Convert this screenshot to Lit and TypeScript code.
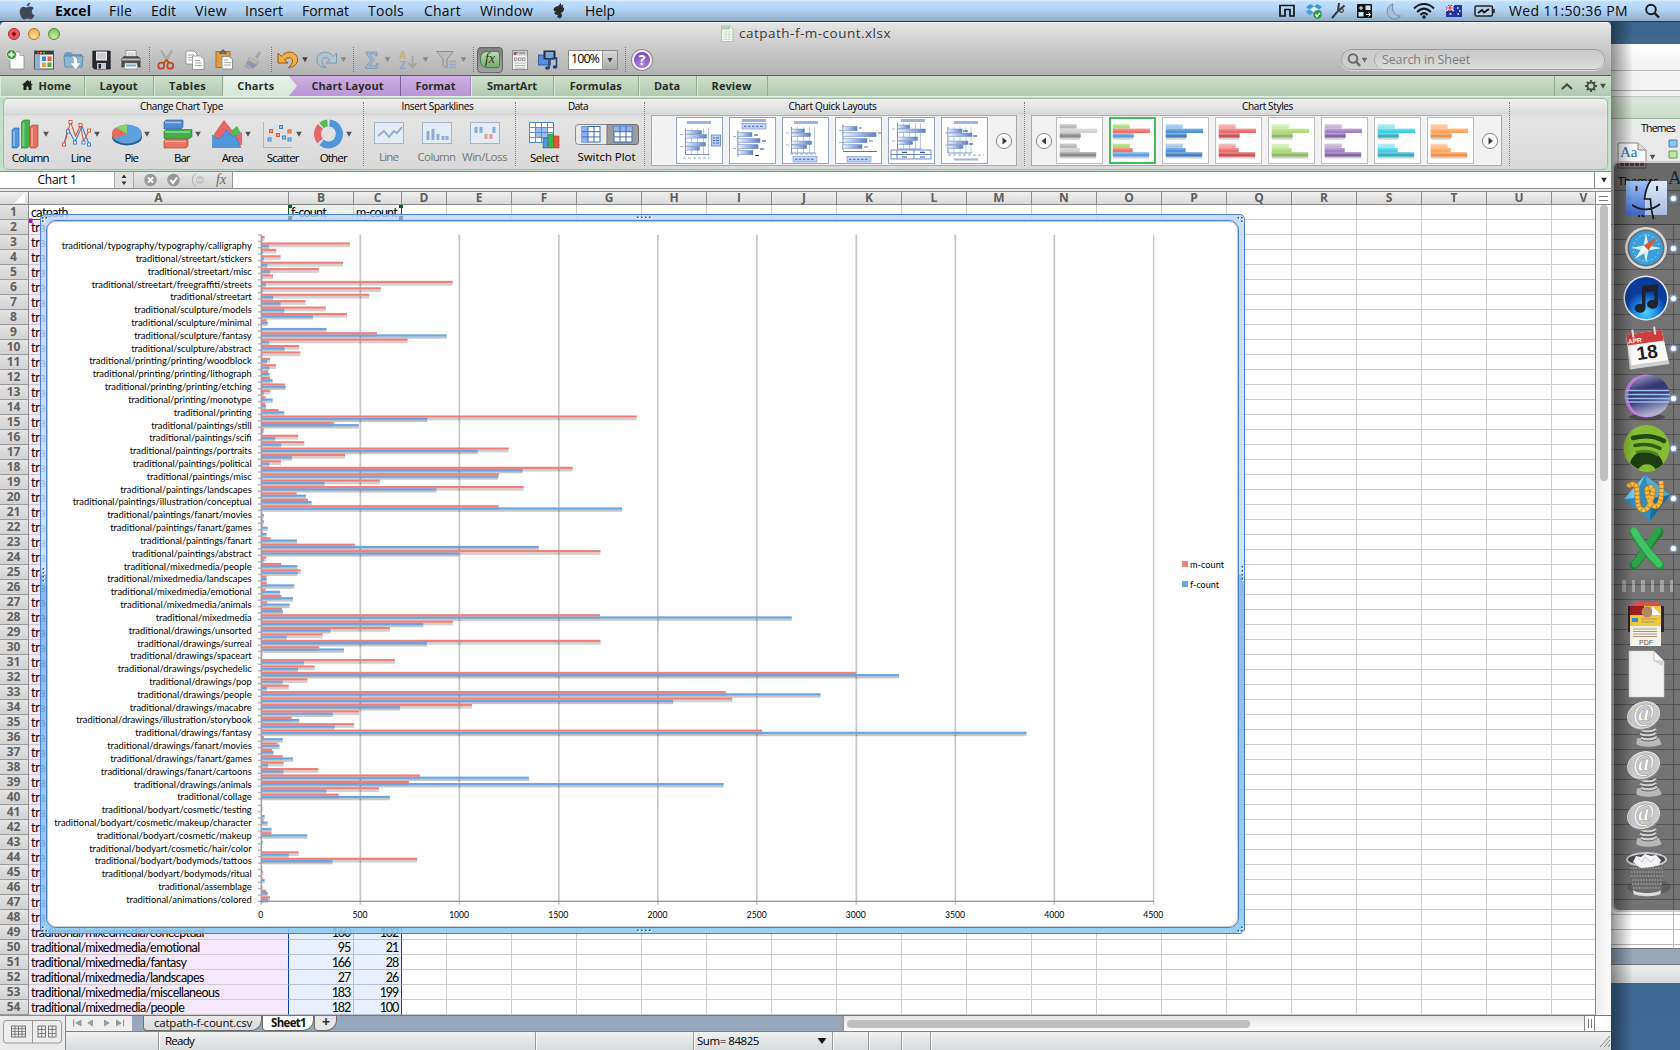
import { LitElement, html, svg, css } from "lit";
import { customElement } from "lit/decorators.js";
import { classMap } from "lit/directives/class-map.js";

/* A label whose tracking is tuned so that it fills the given width. */
const fit = (text: string, w: number) => html`<span class="fit" data-w=${w}>${text}</span>`;

/* [m-count, f-count] per category, from the top of the axis down. */
const BARS: [number, number][] = [
  [17, 5], [447, 40], [76, 8], [97, 13], [412, 30], [290, 45], [59, 7], [965, 24], [603, 7], [544, 59],
  [223, 97], [326, 116], [432, 260], [27, 32], [0, 329], [583, 934], [738, 40], [191, 118], [197, 6], [44, 29],
  [74, 40], [34, 42], [44, 57], [119, 123], [44, 12], [22, 57], [20, 24], [87, 116], [1893, 837], [365, 492],
  [13, 8], [186, 71], [217, 101], [1247, 1091], [422, 155], [99, 40], [1570, 1317], [1198, 1193], [598, 319], [1323, 883],
  [178, 225], [235, 254], [1196, 1819], [5, 13], [7, 13], [8, 32], [8, 27], [47, 180], [472, 1399], [1710, 996],
  [25, 13], [100, 182], [199, 183], [26, 27], [28, 166], [21, 95], [102, 160], [30, 143], [104, 109], [1708, 2675],
  [967, 817], [648, 349], [309, 128], [1710, 835], [292, 417], [6, 0], [673, 215], [270, 185], [2999, 3215], [233, 108],
  [138, 28], [2342, 2820], [2375, 2076], [1062, 699], [494, 361], [153, 191], [469, 370], [2525, 3858], [13, 108], [82, 92],
  [54, 62], [108, 160], [113, 34], [287, 112], [800, 1350], [744, 2331], [593, 329], [390, 648], [4, 4], [6, 5],
  [0, 17], [12, 32], [0, 52], [52, 232], [0, 7], [0, 4], [188, 138], [786, 359], [0, 5], [8, 0],
  [7, 17], [0, 6], [25, 32], [44, 34],
];

/* [category path, drawn width] for every second category. */
const LABELS: [string, number][] = [
  ["typography/typography/calligraphy", 190], ["streetart/stickers", 116], ["streetart/misc", 104],
  ["streetart/freegraffiti/streets", 160], ["streetart", 81.5], ["sculpture/models", 117.5],
  ["sculpture/minimal", 120.5], ["sculpture/fantasy", 117.5], ["sculpture/abstract", 120.5],
  ["printing/printing/woodblock", 162.5], ["printing/printing/lithograph", 159], ["printing/printing/etching", 147],
  ["printing/monotype", 123.5], ["printing", 78], ["paintings/still", 100.5], ["paintings/scifi", 102.5],
  ["paintings/portraits", 122], ["paintings/political", 119], ["paintings/misc", 105], ["paintings/landscapes", 131.5],
  ["paintings/illustration/conceptual", 179], ["paintings/fanart/movies", 144.5], ["paintings/fanart/games", 141.5],
  ["paintings/fanart", 111.5], ["paintings/abstract", 120], ["mixedmedia/people", 128], ["mixedmedia/landscapes", 144.5],
  ["mixedmedia/emotional", 141], ["mixedmedia/animals", 131.5], ["mixedmedia", 96], ["drawings/unsorted", 123],
  ["drawings/surreal", 114.5], ["drawings/spaceart", 121.5], ["drawings/psychedelic", 134], ["drawings/pop", 102.5],
  ["drawings/people", 114.5], ["drawings/macabre", 122], ["drawings/illustration/storybook", 175.5],
  ["drawings/fantasy", 116.5], ["drawings/fanart/movies", 144.5], ["drawings/fanart/games", 141.5],
  ["drawings/fanart/cartoons", 151], ["drawings/animals", 118], ["collage", 74.5], ["bodyart/cosmetic/testing", 150],
  ["bodyart/cosmetic/makeup/character", 197.5], ["bodyart/cosmetic/makeup", 155], ["bodyart/cosmetic/hair/color", 162.5],
  ["bodyart/bodymods/tattoos", 157], ["bodyart/bodymods/ritual", 150], ["assemblage", 93.5], ["animations/colored", 125.5],
];

const X0 = 261.3, UNIT = 99.17 / 500, TOP = 234.7, PITCH = 666.6 / 104;

const COLS = "ABCDEFGHIJKLMNOPQRSTUV".split("");
const FILLED: Record<number, [string, number, number, number]> = {
  49: ["traditional/mixedmedia/conceptual", 173, 160, 102],
  50: ["traditional/mixedmedia/emotional", 169, 95, 21],
  51: ["traditional/mixedmedia/fantasy", 155.5, 166, 28],
  52: ["traditional/mixedmedia/landscapes", 173, 27, 26],
  53: ["traditional/mixedmedia/miscellaneous", 188.5, 183, 199],
  54: ["traditional/mixedmedia/people", 153.5, 182, 100],
};

const arrow = (x: number, y: number, c = "#555") => svg`<path d="M${x - 2.8} ${y - 2.2}h5.6l-2.8 5z" fill=${c}/>`;

/* ---------- toolbar glyphs, 22 px high ---------- */
const tool = (w: number, body: unknown) => html`<svg class="ti" width=${w} height="22" viewBox="0 0 ${w} 22">${body}</svg>`;
const I = {
  fresh: tool(20, svg`<path d="M4 3h10l4 3.500V20H4z" fill="#fdfdfd" stroke="#8b8b8b" stroke-width=".8"/><path d="M14 3v3.500h4" fill="#ddd" stroke="#999" stroke-width=".7"/><circle cx="5.500" cy="5.500" r="5" fill="#2f9a2b" stroke="#fff" stroke-width=".8"/><path d="M5.500 2.500v6M2.500 5.500h6" stroke="#fff" stroke-width="1.800"/>`),
  gallery: tool(21, svg`<rect x=".5" y="2" width="19" height="18" fill="#e8edf2" stroke="#555"/><rect x="1" y="2" width="18" height="3.5" fill="#3a3a3a"/><path d="M3 3.7h2" stroke="#e44" stroke-width="1.6"/><path d="M6 3.7h2" stroke="#ea4" stroke-width="1.6"/><path d="M9 3.7h2" stroke="#5b5" stroke-width="1.6"/><rect x="1" y="6" width="5" height="13.5" fill="#8bb4dd"/><rect x="8" y="7.5" width="4" height="4.5" fill="#3f86d2"/><rect x="13.5" y="7.5" width="4" height="4.5" fill="#e0652f"/><rect x="8" y="13.5" width="4" height="4.5" fill="#e9a33c"/><rect x="13.5" y="13.5" width="4" height="4.5" fill="#59a845"/>`),
  open: tool(22, svg`<path d="M1 5l2-2h5l2 2h9v3H1z" fill="#6f9cbd"/><path d="M1 7h19l-1 11H2z" fill="#8db7d4" stroke="#54809f" stroke-width=".8"/><path d="M9 7c4 0 6 3 5.500 7h3.500l-5.500 6.500L7 14h3.500c0-3 0-5-1.500-7z" fill="#fff" stroke="#6b8da6" stroke-width=".5"/>`),
  save: tool(20, svg`<path d="M.8 2h17.400v18H2.500L.8 18.500z" fill="#2b2b2f" stroke="#161616" stroke-width=".7"/><rect x="4" y="2.500" width="11" height="9" fill="#e9e9ef"/><path d="M5 5h9M5 7h9M5 9h9" stroke="#999" stroke-width=".7"/><rect x="5" y="14" width="9" height="6" fill="#c9c9d2"/><rect x="6.500" y="15" width="2.500" height="4.500" fill="#222"/>`),
  print: tool(21, svg`<path d="M5 1.500h10v8H5z" fill="#fff" stroke="#777" stroke-width=".7"/><path d="M6.500 4h7M6.500 6h7" stroke="#999" stroke-width=".7"/><path d="M.8 9.500l2-2h14.400l2 2V18H.8z" fill="#4b4b4b" stroke="#333" stroke-width=".5"/><path d="M1 9.500h18v2H1z" fill="#bbb"/><path d="M4 14h12l1 6H3z" fill="#f4f4f4" stroke="#777" stroke-width=".6"/><path d="M5 16.500h10" stroke="#6bb0c8" stroke-width="2"/>`),
  cut: tool(20, svg`<path d="M4 1.500l8 13M15 1.500l-8 13" stroke="#8e8e8e" stroke-width="1.900"/><path d="M4 1.500l8 13M15 1.500l-8 13" stroke="#e6e6e6" stroke-width=".6"/><circle cx="4.300" cy="16.700" r="3" fill="none" stroke="#c64a1f" stroke-width="1.800"/><circle cx="13.200" cy="16.700" r="3" fill="none" stroke="#c64a1f" stroke-width="1.800"/><path d="M6.500 14l3-3 3 3" fill="none" stroke="#c64a1f" stroke-width="1.600"/>`),
  copy: tool(21, svg`<g fill="#fbfbfb" stroke="#8a8a8a" stroke-width=".8"><path d="M1 2h8l3 3v10H1z"/><path d="M7.500 7h8l3.500 3v10.500H7.500z"/></g><path d="M3 6h6M3 8.500h4M3 11h4M10 11.500h5M10 14h7M10 16.500h7" stroke="#9a9a9a" stroke-width=".8"/>`),
  paste: tool(20, svg`<rect x="1" y="2.500" width="14" height="16" fill="#dca33d" stroke="#93661a" stroke-width=".8"/><path d="M4.500 4.500l1-2h1.500V1h2v1.500h1.500l1 2z" fill="#777" stroke="#444" stroke-width=".6"/><path d="M7 7.500h7l3.500 3V20H7z" fill="#fcfcfc" stroke="#808080" stroke-width=".8"/><path d="M9 11h4M9 13.500h7M9 16h7" stroke="#9a9a9a" stroke-width=".8"/>`),
  brush: tool(20, svg`<g opacity=".75"><path d="M12 8l4-6 2 1.500-3.500 6.500z" fill="#9d9d9d"/><path d="M6 8l9 5-1 3-9-5z" fill="#c0b7a8" stroke="#8d867c" stroke-width=".6"/><path d="M5 11l9 5c-2 2-5 4-8 4L1 17c2-1 3-3 4-6z" fill="#8088b8"/><path d="M3 16l5 3" stroke="#cdae6d" stroke-width="2"/></g>`),
  undo: tool(34, svg`<path d="M1 4v10h10L7.500 11C10 7.500 15.500 8 15.500 12c0 2.500-1.500 4.500-4 6.500 6-.3 9.500-4 9-8.500C20 3 10 0 4.500 7.500z" fill="#f3ae42" stroke="#8e5a14" stroke-width="1"/>${arrow(28, 10.500, "#444")}`),
  redo: tool(34, svg`<path d="M20.500 4v10h-10L14 11C11.500 7.500 6 8 6 12c0 2.500 1.500 4.500 4 6.500C4 18.200.5 14.500 1 10 1.500 3 11.500 0 17 7.500z" fill="#b1c4d1" stroke="#8099aa" stroke-width="1"/>${arrow(27.500, 10.500, "#8a8a8a")}`),
  sum: tool(28, svg`<path d="M1 3h11v4h-1.500c0-1.500-.5-2-2-2H5l4 5.500L4.500 17H9c2 0 2.500-.8 3-2.500h1L12 19.500H0.500v-1.500L6 11 1 4.500z" fill="#9fb6d2" stroke="#6f8aad" stroke-width=".6"/>${arrow(22.500, 10.500, "#8a8a8a")}`),
  az: tool(32, svg`<g font-family="Liberation Sans,sans-serif" font-weight="700" font-size="10.500" opacity=".75"><text x="1" y="9.500" fill="#d3a069">A</text><text x="1.500" y="20" fill="#7f9bd0">Z</text></g><path d="M14.500 7v10M10.500 14l4 4.500 4-4.500" fill="none" stroke="#a6a6a6" stroke-width="2"/>${arrow(27.500, 10.500, "#8a8a8a")}`),
  filter: tool(32, svg`<path d="M.5 2.500h17L11 10v9l-4-2.500V10z" fill="#bdbdbd" stroke="#8a8a8a" stroke-width=".9"/><path d="M13 12.500h7M13 15.500h7M13 18.500h7" stroke="#8fa9d8" stroke-width="1.300"/>${arrow(27.500, 10.500, "#8a8a8a")}`),
  toolbox: tool(18, svg`<rect x=".5" y="1.500" width="15" height="19" fill="#f4f4f4" stroke="#808080" stroke-width=".8"/><rect x="1" y="2" width="14" height="4.500" fill="#ccc"/><circle cx="3" cy="4.500" r="1.500" fill="#e33"/><path d="M2 3.500h4M7 4h6" stroke="#777"/><rect x="2.500" y="9" width="2.500" height="2.500" fill="none" stroke="#777" stroke-width=".7"/><rect x="6.500" y="9" width="2.500" height="2.500" fill="none" stroke="#777" stroke-width=".7"/><rect x="10.500" y="9" width="2.500" height="2.500" fill="none" stroke="#777" stroke-width=".7"/><path d="M2.500 14h11M2.500 16.500h11M2.500 19h11" stroke="#999" stroke-width=".7"/>`),
  media: tool(21, svg`<rect x=".5" y="6" width="12" height="10" fill="#5b8ee0" stroke="#234c9a" stroke-width=".8"/><rect x="5.500" y="1.500" width="12" height="9" fill="#26303c"/><rect x="7.500" y="3" width="8" height="6" fill="#79a7cf"/><path d="M11 19V10l7.500-1v9" fill="none" stroke="#22417c" stroke-width="1.600"/><ellipse cx="9.500" cy="19" rx="2.300" ry="1.700" fill="#22417c"/><ellipse cx="17" cy="18" rx="2.300" ry="1.700" fill="#22417c"/>`),
};

/* ---------- chart-type glyphs, 50 x 33 ---------- */
const chartTypes: [string, number, unknown][] = [
  ["Column", 37, svg`<g stroke-width=".6"><path d="M7 13l2-2h5v18l-2 2H7z" fill="#4f97da" stroke="#2a63a6"/><path d="M16.500 5l2-2h6v26l-2 2h-6z" fill="#41b54a" stroke="#1f7e2a"/><path d="M25 10l2-2h6v21l-2 2h-6z" fill="#e8705c" stroke="#b23f30"/></g><path d="M9 14v15M18.500 6v23M27 11v18" stroke="#fff" opacity=".3" stroke-width="2"/>`],
  ["Line", 20, svg`<path d="M8 27l4-15 7 13 7-16 7 18" fill="none" stroke="#3f86cf" stroke-width="1.100"/><path d="M8 28L14.500 5l5 14 5-11 3 16 6-11" fill="none" stroke="#dd5a3c" stroke-width="1.100"/><g fill="#fff" stroke="#dd5a3c"><rect x="6.500" y="26" width="3" height="3"/><rect x="13" y="3.500" width="3" height="3"/><rect x="23" y="6.500" width="3" height="3"/><rect x="31.500" y="12" width="3" height="3"/></g><g fill="#fff" stroke="#3f86cf"><rect x="10.500" y="13" width="3" height="3"/><rect x="17.500" y="24" width="3" height="3"/><rect x="26" y="24" width="3" height="3"/><rect x="31.500" y="26" width="3" height="3"/></g>`],
  ["Pie", 13.5, svg`<ellipse cx="21" cy="20" rx="15" ry="8.500" fill="#2b5d94"/><ellipse cx="21" cy="17" rx="15" ry="9.500" fill="#5f9fdc"/><path d="M21 17L7.500 21.500A15 9.500 0 0 1 10 10.500z" fill="#ea6a5a"/><path d="M21 17L10 10.500A15 9.500 0 0 1 21 7.500z" fill="#8ad06a"/>`],
  ["Bar", 15.5, svg`<g stroke-width=".6"><path d="M7 5l2-2h17v7l-2 2H7z" fill="#4f8ed6" stroke="#285a9c"/><path d="M7 14.500l2-2h26v7l-2 2H7z" fill="#3fb04c" stroke="#1f7e2a"/><path d="M7 24l2-2h22v7l-2 2H7z" fill="#e8705c" stroke="#b23f30"/></g><path d="M8 5.500h16M8 15h25M8 24.500h21" stroke="#fff" opacity=".45" stroke-width="1.500"/>`],
  ["Area", 21, svg`<path d="M7.500 17l9.500-13.500L27 16v12H8z" fill="#e8666a" stroke="#c23e44" stroke-width=".5"/><path d="M24 14l6-5 5 9v9H24z" fill="#56b95a"/><path d="M29 19l6-4v13h-6z" fill="#e8666a"/><path d="M5.500 18l6.500 4 8-9 6 7 2-2 6 12.500H5.500z" fill="#4f97da" stroke="#2e6cb0" stroke-width=".5"/>`],
  ["Scatter", 32, svg`<path d="M5.500 5v25.500H34" fill="none" stroke="#aaa" stroke-width=".8"/><g fill="#e9a08c" stroke="#d75b3a"><rect x="11.500" y="12.500" width="3" height="3"/><rect x="18.500" y="16.500" width="3" height="3"/><rect x="30" y="13" width="3" height="3"/></g><g fill="#a6c8ec" stroke="#3f86cf"><rect x="21.500" y="8.500" width="3" height="3"/><rect x="10" y="21" width="3" height="3"/><rect x="24.500" y="19" width="3" height="3"/><rect x="30" y="21" width="3" height="3"/></g>`],
  ["Other", 27, svg`<g transform="translate(20.500 17)" fill="none" stroke-width="7"><path d="M1 -11A11 11 0 1 1 -7 8.500" stroke="#4f97da"/><path d="M-8.500 7A11 11 0 0 1 -8 -7.500" stroke="#e8666a"/><path d="M-7 -8.500A11 11 0 0 1 -1 -11" stroke="#56b95a"/></g>`],
];

const sparks: [string, number, unknown][] = [
  ["Line", 19, svg`<path d="M4 14l6-5 5 6 5-6 3 2 5-6" fill="none" stroke="#8fabd6" stroke-width="1.800"/>`],
  ["Column", 38, svg`<path d="M6 18V9M11 18V7M16 18v-6M21 18v-4M25 18v-4" stroke="#8fabd6" stroke-width="3"/>`],
  ["Win/Loss", 45, svg`<path d="M6 11V5M11 11V5M24 11V5" stroke="#8fabd6" stroke-width="3"/><path d="M16 17v-5M21 17v-5" stroke="#dfa196" stroke-width="3"/>`],
];

/* ---------- quick layouts ---------- */
type Q = { o: number; t: number; b: number[]; grid?: boolean; ext?: unknown };
const bar = (x: number, y: number, w: number, h = 4) => svg`<rect x=${x} y=${y} width=${w} height=${h} fill="url(#qb)" stroke="#6f8bc4" stroke-width=".5"/>`;
const block = (x: number, y: number, w: number, h: number) => svg`<rect x=${x} y=${y} width=${w} height=${h} fill="#9db3e2"/>`;
const pill = (x: number, y: number) => svg`<rect x=${x} y=${y} width="24" height="5.500" fill="#c3d3f3" stroke="#7e9bd6" stroke-width=".7"/><path d="M${x + 2} ${y + 2.800}h20" stroke="#5b7cc0" stroke-dasharray="2.500 1.500" stroke-width="1.200"/>`;
const QL: Q[] = [
  { o: 9.5, t: 13.5, b: [16, 21, 20, 14], grid: true, ext: svg`${block(11, 4, 24, 3)}<rect x="35.500" y="18" width="9" height="11" fill="#b9ccf2" stroke="#5f84cc" stroke-width=".8"/><path d="M37 21h2m1 0h3M37 23.500h2m1 0h3M37 26h2m1 0h3" stroke="#4467b0"/><path d="M7 41h26" stroke="#8fa6d8" stroke-dasharray="3 2"/>` },
  { o: 9, t: 15.500, b: [14, 22, 20, 15], ext: svg`${block(13, 2, 24, 3)}${pill(13, 6.500)}<path d="M25 18h4M33 24h4M31 32h4M26 38.500h4" stroke="#2b3f70" stroke-width="1"/>` },
  { o: 9.5, t: 12, b: [13, 19, 20, 15], grid: true, ext: svg`${block(12, 4, 24, 3)}${pill(11, 39.500)}<path d="M8 37h26" stroke="#8fa6d8" stroke-dasharray="3 2"/>` },
  { o: 8, t: 9.500, b: [14, 33, 24, 19], ext: svg`${pill(12, 39.500)}<path d="M8 34.500h34M24 11h3M43 16h3M34 24h4M29 30h4" stroke="#4d6690" stroke-width=".9"/>` },
  { o: 9.5, t: 8, b: [12, 28, 20, 15], grid: true, ext: svg`${block(13, 2, 24, 3)}<path d="M3 33h40v9H3zM3 37.500h40M9 33v9M26 33v9" fill="none" stroke="#5d7cc0" stroke-width=".9"/><path d="M14 35.300h5M32 35.300h5M14 40h5M32 40h5" stroke="#34508f" stroke-width="1.200"/>` },
  { o: 7, t: 12, b: [14, 24, 20, 15], grid: true, ext: svg`${block(13, 4, 24, 3)}${block(13, 41.500, 24, 2)}<path d="M22 14h5M32 19h4M28 27h4" stroke="#27386a"/><path d="M7 38h36" stroke="#8fa6d8" stroke-dasharray="3 2"/>` },
];
const quick = (q: Q) => html`<svg class="thumb" width="47" height="47" viewBox="0 0 47 47">
  <defs><linearGradient id="qb"><stop offset="0" stop-color="#eef3fc"/><stop offset="1" stop-color="#5b7fca"/></linearGradient></defs>
  ${q.grid ? svg`<path d="M${q.o + 6} ${q.t - 2}v26M${q.o + 12} ${q.t - 2}v26M${q.o + 18} ${q.t - 2}v26M${q.o + 23} ${q.t - 2}v26" stroke="#9fb2da" stroke-width=".7"/>` : ""}
  <path d="M${q.o} ${q.t - 2}v26" stroke="#5b79b8" stroke-width=".9"/>
  ${q.b.map((w, i) => bar(q.o, q.t + i * (q.grid ? 4 : 6) + (i > 1 && q.grid ? 4 : 0), w, q.grid ? 3.600 : 4.300))}
  ${q.grid ? svg`<path d="M${q.o} ${q.t + 24}h24" stroke="#5b79b8" stroke-width=".8"/>` : ""}
  <path d="M4 ${q.t + 4}h3M4 ${q.t + 16}h3" stroke="#9db3e2"/>
  ${q.ext}<rect x=".5" y=".5" width="46" height="46" fill="none" stroke="#93a5c3"/></svg>`;

const STYLES: [string, string, string][] = [
  ["#b9b9b9", "#d0d0d0", "#8c8c8c"], ["#aede7c", "#f0706c", "#5f9fe0"], ["#a9c6ec", "#4f94d8", "#4480c0"],
  ["#f6a8a8", "#ef6b6b", "#cc5353"], ["#cfeeae", "#addc78", "#8fb964"], ["#c4b4d8", "#a183c4", "#8465a8"],
  ["#9be6f2", "#3fd0e6", "#35afc4"], ["#ffc298", "#ffa35a", "#f0924a"],
];
const styleThumb = (c: [string, string, string], i: number) => {
  const rows: [number, number, number][] = [[7.300, 17, 0], [11.700, 37.300, 1], [16.300, 21, 2], [26.700, 17, 0], [31, 20, 1], [35.300, 36.500, 2]];
  return html`<svg class="thumb" width="47" height="47" viewBox="0 0 47 47">
  ${[20.700, 39.500].map((y) => svg`<rect x="4" y=${y} width=${y > 30 ? 36 : 20} height="2" fill="#000" opacity=".18"/>`)}
  ${rows.map(([y, w, k]) => svg`<rect x="3.700" y=${y} width=${w} height="4.400" fill=${c[k]}/><rect x="3.700" y=${y} width=${w} height="1.800" fill="#fff" opacity=".22"/>`)}
  <rect x=${i === 1 ? 1 : 0.5} y=${i === 1 ? 1 : 0.5} width=${i === 1 ? 45 : 46} height=${i === 1 ? 45 : 46} fill="none" stroke=${i === 1 ? "#3fbf5c" : "#bdbdbd"} stroke-width=${i === 1 ? 2 : 1}/></svg>`;
};
const pager = (left: boolean) => html`<svg class="pager" width="18" height="18" viewBox="0 0 18 18"><circle cx="9" cy="9" r="7.600" fill="#fafafa" stroke="#8b8b8b"/><path d=${left ? "M11 5.500v7L6.500 9z" : "M7.500 5.500v7L12 9z"} fill="#3a3a3a"/></svg>`;

/* ---------- dock ---------- */
const dk = (body: unknown, lit = false) => html`<div class="dcell"><svg width="46" height="48" viewBox="0 0 46 48">${body}</svg><i class=${classMap({ dot: lit })}></i></div>`;
const spring = svg`<ellipse cx="24" cy="43" rx="12" ry="3.500" fill="#8a8a8a"/><path d="M13 38h22l3 6c-5 4-22 4-26 0z" fill="#b9b9b9" stroke="#7d7d7d" stroke-width=".6"/><path d="M17 38c4 2 12 2 16-1M16 34c4 2 13 2 16-1M17 30c4 2 12 2 15-1" fill="none" stroke="#d2d2d2" stroke-width="2.200"/><path d="M17 39.500c4 2 12 2 16-1M16 35.500c4 2 13 2 16-1M17 31.500c4 2 12 2 15-1" fill="none" stroke="#555" stroke-width=".9"/><ellipse cx="20" cy="16.500" rx="16.500" ry="13.500" transform="rotate(-20 20 16.500)" fill="#858585"/><ellipse cx="19.500" cy="15" rx="16.500" ry="13" transform="rotate(-20 19.500 15)" fill="#c9c9c9" stroke="#e9e9e9" stroke-width=".8"/><text x="20" y="21" text-anchor="middle" font-family="Liberation Serif,serif" font-style="italic" font-size="25" font-weight="700" fill="#fff" stroke="#8f8f8f" stroke-width=".5">@</text>`;
const rope = "M4 13c2-4 8-4 9 1 1 8-1 21 6 22 7 0 9-12 10-19 0-6-7-4-6 0 1 9 5 17 10 15 5-3 5-16 4-25";

const dock = html`
  ${dk(svg`<defs><linearGradient id="fa" x2="0" y2="1"><stop offset="0" stop-color="#9dc3f5"/><stop offset="1" stop-color="#3e68c6"/></linearGradient><linearGradient id="fb" x2="0" y2="1"><stop offset="0" stop-color="#dfeafb"/><stop offset="1" stop-color="#a9b9dc"/></linearGradient></defs><path d="M2 7h24v34H2z" fill="url(#fa)"/><path d="M26 7h17v34H21v-16z" fill="url(#fb)"/><path d="M27 6c-5 7-6 13-6.500 19h6c0 6 1 12 3 20" fill="none" stroke="#151515" stroke-width="1.600"/><path d="M8 31c9 6 20 6 28-1M12.500 12v5M33 12v5" fill="none" stroke="#1c1c28" stroke-width="1.900"/>`, true)}
  ${dk(svg`<circle cx="22" cy="25" r="21" fill="#4a4a4a"/><circle cx="22" cy="24" r="21" fill="#d9d9d9"/><circle cx="22" cy="24" r="18.500" fill="#6a6a6a"/><circle cx="22" cy="24" r="17" fill="#3a9edb"/><circle cx="22" cy="24" r="13" fill="none" stroke="#bfe4fa" stroke-width="1" stroke-dasharray="1.500 3"/><path d="M22 9l2.500 12.500L37 24l-12.500 2.500L22 39l-2.500-12.500L7 24l12.500-2.500z" fill="#d3effc"/><path d="M33 13L19.500 21.500l5 5z" fill="#e2552b"/><path d="M11 35l8.500-13.500 5 5z" fill="#f7f7f7"/>`, true)}
  ${dk(svg`<defs><radialGradient id="it" cy=".85"><stop offset="0" stop-color="#46d7ff"/><stop offset=".6" stop-color="#1d7de0"/><stop offset="1" stop-color="#0c3c9b"/></radialGradient></defs><circle cx="22" cy="24" r="22.500" fill="#e9eef6"/><circle cx="22" cy="24" r="21" fill="url(#it)"/><path d="M18 12l16-2v20a5.500 4.500 0 1 1-3.500-4V17l-9 1.200V34A5.500 4.500 0 1 1 18 30z" fill="#20242e"/>`, true)}
  ${dk(svg`<g transform="rotate(-8 22 24)"><path d="M4 9h36l3 34H3z" fill="#cfcfcf"/><path d="M4 8h36l2 31H5z" fill="#fafafa"/><path d="M4 8h36l.8 11H4.500z" fill="#cf3d3d"/><text x="5" y="17.500" font-family="Liberation Sans,sans-serif" font-weight="700" font-size="6.500" fill="#fff">APR</text><text x="22.500" y="35" text-anchor="middle" font-family="Liberation Sans,sans-serif" font-weight="700" font-size="19" fill="#222">18</text><path d="M11 4v8M33 4v8" stroke="#ddd" stroke-width="2"/></g>`, true)}
  ${dk(svg`<defs><linearGradient id="ec" x2=".3" y2="1"><stop offset="0" stop-color="#b9aede"/><stop offset=".4" stop-color="#34346f"/><stop offset=".65" stop-color="#3f4080"/><stop offset="1" stop-color="#b0b0cc"/></linearGradient></defs><ellipse cx="23" cy="43" rx="18" ry="3.500" fill="#333" opacity=".6"/><circle cx="22" cy="22" r="21.500" fill="#c97be6"/><circle cx="25" cy="22" r="20.800" fill="url(#ec)"/><path d="M1 16.500h44M1 20.500h45M1 24.500h45M2 28h43" stroke="#9fc1ea" stroke-width="1.400"/>`, true)}
  ${dk(svg`<circle cx="22.500" cy="24" r="23" fill="#86bb34"/><path d="M6 39a17 17 0 0 1 33 1A23 23 0 0 1 6 39z" fill="#1d3d10"/><path d="M14 46a10 10 0 0 1 18 0 23 23 0 0 1-18 0z" fill="#86bb34"/><g fill="none" stroke-linecap="round"><path d="M9 14c11-3 22-2 31 3" stroke="#26480f" stroke-width="4.500"/><path d="M11 21.500c9-2 18-1 25 3" stroke="#2f5a14" stroke-width="3.500"/><path d="M13 28c7-1.500 14-1 20 2.500" stroke="#4f8424" stroke-width="2.800"/></g>`, true)}
  ${dk(svg`<path d="M21 1l25 20-20 26L0 25z" fill="#2d8fc0"/><path d="M21 1L10 24 0 25z" fill="#7cc7e6"/><path d="M21 1l25 20-19 3z" fill="#4fabd4"/><path d="M26 47l2-23 18-3z" fill="#1d6c9c"/><path d=${rope} fill="none" stroke="#b9720f" stroke-width="5.400"/><path d=${rope} fill="none" stroke="#f7b846" stroke-width="4.200" stroke-dasharray="3.200 .7"/>`, true)}
  ${dk(svg`<g fill="none" stroke-linecap="round" stroke-width="9"><path d="M35 8C26 18 20 30 10 41" stroke="#1f8038"/><path d="M34 7C26 17 20 29 11 40" stroke="#2f9f4b" stroke-width="7"/><path d="M10 8c7 12 16 24 26 33" stroke="#23923f"/><path d="M10 7c7 12 16 24 25 33" stroke="#3fc463" stroke-width="7"/></g>`, true)}
  <div class="dsep">${[0, 1, 2, 3, 4, 5].map(() => html`<i></i>`)}</div>
  ${dk(svg`<path d="M9 2h26v6H9z" fill="#d35454"/><path d="M4 6h36v26H4z" fill="#2a2422"/><path d="M6 6h31v40H6z" fill="#f6f3ea"/><path d="M6 6h31v20H6z" fill="#f0c93d"/><path d="M6 6h14v9H6z" fill="#9c1c1c"/><circle cx="23" cy="12" r="5.500" fill="#b98567"/><path d="M8 18h6v4H8z" fill="#2c8fd0"/><path d="M17 19h16M17 22h14M9 29h24M9 31.500h24M9 34h24M9 36.500h24" stroke="#a8947a" stroke-width="1"/><path d="M28 6l9 9h-9z" fill="#fff"/><text x="22" y="45" text-anchor="middle" font-family="Liberation Sans,sans-serif" font-size="7" fill="#555">PDF</text>`)}
  ${dk(svg`<path d="M5 1h25l10 10v36H5z" fill="#f3f3f3" stroke="#c9c9c9" stroke-width=".6"/><path d="M30 1v10h10z" fill="#fff" stroke="#b4b4b4" stroke-width=".8"/><path d="M30 11h10l-2 5z" fill="#d2d2d2"/>`)}
  ${dk(spring)}${dk(spring)}${dk(spring)}
  ${dk(svg`<ellipse cx="25" cy="37" rx="22" ry="8" fill="#222" opacity=".25"/><path d="M4 9h37l-4 34c-4 4-24 4-28 0z" fill="#6b6b6b"/><path d="M6 14h34M6 18h33M7 22h32M7 26h32M8 30h30M8 34h30M9 38h28" stroke="#c9c9c9" stroke-width=".8" stroke-dasharray="1.500 1.300"/><path d="M9 40c4 4 24 4 28 0l-.5 4c-5 3-22 3-27 0z" fill="#dcdcdc"/><ellipse cx="22.500" cy="9.500" rx="19.500" ry="6.500" fill="#4a4a4a" stroke="#c6c6d6" stroke-width="2"/><path d="M9 12l3-6 5 1 4-3 6 2 5-1 5 5-2 5-8 2-10 1z" fill="#f6f6f6"/><path d="M14 8l4 4 3-5 6 5 4-4" fill="none" stroke="#c4c4c4"/>`)}`;

@customElement("app-root")
export class AppRoot extends LitElement {
  static styles = css`
    :host { display: block; width: 1680px; height: 1050px; overflow: hidden; font-family: "Open Sans", "Noto Sans", sans-serif; font-size: 11px; color: #111; line-height: 1; }
    * { box-sizing: border-box; }
    svg { display: block; overflow: visible; }
    .fit { display: inline-block; white-space: nowrap; }
    .menubar { height: 22px; display: grid; align-items: center; padding-left: 19px; font-size: 14px; color: #0a0a0a;
      grid-template-columns: 36px 54px 42px 44px 50px 57px 66px 56px 56px 73px 32px 694px 27px 25px 26px 30px 26px 33px 28px 35px 136px 35px;
      background: linear-gradient(#e0f0ff 0, #bcdfff 2px, #b3d5f6 9px, #9dbbd9 17px, #8fa9c4); border-bottom: 1px solid #1d3c60; }
    .menubar b { font-weight: 700; }
    .desk { position: relative; height: 1028px; background: linear-gradient(#38648f, #42698f 22px, #3e6793 960px, #3f6a97); overflow: hidden; }

    .back { position: absolute; left: 1600px; top: 22px; width: 80px; height: 939px; padding-left: 11px; background: #fff; display: flex; flex-direction: column; }
    .b-title { height: 27px; background: linear-gradient(#fff, #f0f0f0); border-bottom: 1px solid #b9b9b9; }
    .b-tools { height: 20px; background: #f3f3f3; border-bottom: 1px solid #b0b0b0; }
    .b-gap { height: 6px; background: #f2f2f2; border-bottom: 1px solid #c3c3c3; }
    .b-tabs { height: 22px; background: linear-gradient(#dde7dc, #cddccb); border-bottom: 1px solid #9dbb9f; }
    .b-rib { height: 72px; background: #e9e9e9; padding: 4px 0 0 30px; font-size: 10.5px; color: #000; border-bottom: 1px solid #92ab95; }
    .b-rib svg { margin: 8px 0 0 -24px; }
    .b-head { height: 34px; display: flex; align-items: end; justify-content: center; padding: 0 9px 6px 0; font-weight: 700; color: #222; background: #eee; border-bottom: 1px solid #888; }
    .b-cells { flex: 1; background: linear-gradient(90deg, transparent 62px, #bbb 62px, #bbb 63px, transparent 63px), repeating-linear-gradient(#fff 0 14px, #bbb 14px 15px); }
    .b-strip { height: 17px; background: #98a7ba; border-top: 1px solid #777; border-bottom: 1px solid #777; }
    .b-stat { height: 18px; background: linear-gradient(#eef0f0, #d6d9da); }
    .castle { position: absolute; left: 1611px; top: 0; width: 22px; height: 1028px; background: linear-gradient(90deg, rgba(0,0,0,.42), rgba(0,0,0,0)); }

    .dock { position: absolute; left: 1612px; top: 139px; width: 80px; height: 751px; border: 2px solid rgba(235,235,235,.75); border-radius: 7px; background: rgba(0,0,0,.55); padding-top: 10px; }
    .dcell { height: 50px; display: flex; align-items: center; padding-left: 10px; gap: 1px; }
    .dot { width: 5px; height: 5px; border-radius: 50%; background: #fff; box-shadow: 0 0 2px 1px #9cc4ff; }
    .dsep { height: 26px; display: flex; align-items: center; gap: 6px; padding-left: 8px; }
    .dsep i { width: 3.500px; height: 12px; background: rgba(255,255,255,.35); }

    .win { position: absolute; left: 0; top: 0; width: 1611px; height: 1028px; display: flex; flex-direction: column; background: #fff; border-radius: 5px 5px 0 0; overflow: hidden; }
    .chrome { height: 54px; background: linear-gradient(#e6e6e6, #cecece 22px, #b2b2b2); border-bottom: 1px solid #5e5660; box-shadow: inset 0 1px #f4f4f4; }
    .title { height: 24px; display: grid; grid-template-columns: 8px 20px 20px 673px 18px auto; align-items: center; font-size: 13.5px; color: #3c3c3c; padding-bottom: 1px; }
    .title > :first-child { grid-column: 2; }
    .light { width: 12px; height: 12px; border-radius: 50%; border: 1px solid; }
    .red { background: radial-gradient(#7a0c12 20%, #e8434b 28%, #f08a8e); border-color: #a8272d; }
    .amber { background: radial-gradient(circle at 50% 80%, #ffe0a0, #eda33c); border-color: #b27420; }
    .green { background: radial-gradient(circle at 50% 80%, #cdf0a6, #6fb750); border-color: #4f8a3a; }
    .tools { height: 27px; display: grid; align-items: center; padding-left: 6px;
      grid-template-columns: 28px 29px 29px 29px 28px 8px 28px 30px 28px 28px 6px 39px 37px 12px 33px 38px 37px 4px 35px 26px 30px 57px 7px 709px 264px; }
    .tsep { height: 25px; width: 0; border-left: 1px dotted #777; }
    .fxb { width: 26px; height: 26px; border-radius: 4px; border: 1px solid #666; background: linear-gradient(#7f7f7f, #a2a2a2); display: grid; place-items: center; }
    .fxi { width: 20px; height: 17px; border-radius: 7px 3px 3px 7px; background: linear-gradient(#b9dbb2, #78ac72); border: 1px solid #4d7c4a; font: italic 14px/13px "Liberation Serif", serif; text-align: center; color: #1e3a1c; }
    .zoom { width: 50px; height: 20px; display: flex; border: 1px solid #8b8b8b; background: #fff; font-size: 12.5px; align-items: center; padding-left: 2px; color: #000; justify-content: space-between; }
    .zoom svg { background: linear-gradient(#d9d9d9, #aaa); border-left: 1px solid #999; }
    .help { width: 20px; height: 20px; border-radius: 50%; background: radial-gradient(circle at 50% 80%, #b086e4, #6a3eb4); border: 2px solid #f4f0fa; box-shadow: 0 0 0 1px #8a8a8a; color: #fff; font-weight: 700; font-size: 14px; line-height: 16px; text-align: center; }
    .search { width: 264px; height: 21px; border: 1px solid #9c9c9c; border-radius: 11px; background: #cecece; display: flex; align-items: center; padding-left: 5px; box-shadow: 0 1px rgba(255,255,255,.5); }
    .search .in { margin-left: 5px; flex: 1; height: 19px; border-left: 1px solid #aaa; border-radius: 10px; background: linear-gradient(#c9c9c9, #dcdcdc); padding: 4px 0 0 7px; font-size: 12.5px; color: #7d7d7d; }

    .tabs { height: 20px; display: flex; background: linear-gradient(#cfdecd, #b1c9b0); font-weight: 700; font-size: 11px; color: #2b2f2b; }
    .tab { display: flex; align-items: center; justify-content: center; border-right: 1px solid #8fae92; box-shadow: inset 1px 0 #dbe8d9; gap: 6px; padding-bottom: 1.500px; }
    .w84 { width: 84.500px; } .home { padding-left: 9px; }
    .w69 { width: 69px; } .w83 { width: 83px; } .w112 { width: 112px; padding-left: 6px; } .w70 { width: 70px; } .w58 { width: 58px; } .w71 { width: 71px; }
    .active { width: 66.500px; background: linear-gradient(#e9f2ea, #d7e7d9); position: relative; border: 0; z-index: 1; }
    .active::after { content: ""; position: absolute; left: 100%; top: 0; width: 8px; height: 20px; background: linear-gradient(#e6f0e7, #d7e7d9); clip-path: polygon(0 0, 100% 50%, 0 100%); }
    .violet { background: linear-gradient(#cdb0e2, #b995d6); border-color: #7e609a; box-shadow: none; }
    .w70.violet { border-right-color: #a98cc0; }
    .tabs .end { margin-left: auto; width: 57px; border-left: 1px solid #8fae92; padding: 4px 0 0 7px; }

    .ribbon { height: 75px; background: #c4dfca; padding: 2px 3px 1px 2.500px; box-shadow: inset 0 1px #dff0e2; }
    .panel { height: 72px; border: 1px solid #a3b8a6; border-radius: 5px; background: linear-gradient(#efefef, #dcdcdc 14px, #e4e4e4 20px, #d9d9d9); display: flex; }
    .group { border-right: 1px dotted #808080; margin: 3px 0 5px; height: 64px; display: flex; flex-direction: column; }
    .group h3 { margin: 0; height: 13px; line-height: 9px; font-weight: 400; font-size: 10px; text-align: center; color: #000; border-bottom: 1px solid #d3d3d3; padding-right: 3px; }
    .g1 { width: 360px; } .g2 { width: 152px; } .g3 { width: 129px; } .g4 { width: 380px; } .g5 { width: 485px; }
    .g5 h3 { padding: 0 0 0 2px; }
    .row { display: flex; }
    .g1 .row { padding-left: 1.500px; }
    .cell { width: 50.500px; display: flex; flex-direction: column; align-items: center; font-size: 11.500px; color: #000; gap: 2px; padding-top: 2px; }
    .g2 .cell { width: 48px; color: #777; padding-top: 7px; gap: 7px; } .g2 .row { padding-left: 1px; }
    .g3 .cell { width: 58px; padding-top: 5px; gap: 3px; } .g3 .cell + .cell { width: 70px; padding-top: 9px; gap: 6px; margin-left: -2px; }
    .strip { margin: 1px 6.500px 0; height: 54px; border: 1px solid #a9a9a9; background: #f2f2f2; display: flex; align-items: center; gap: 6px; }
    .strip .thumb { background: #fff; }
    .g4 .strip { padding-left: 24px; } .g4 .pager { margin-left: 1px; }
    .g5 .strip { padding-left: 3px; } .g5 .pager + .thumb { margin-left: -3px; } .g5 .thumb + .pager { margin-left: 1px; }

    .formula { height: 18px; border-top: 1px solid #8c8c8c; border-bottom: 1px solid #8c8c8c; background: #e2e2e2; display: grid; grid-template-columns: 115px 18px 100px 1fr 16px; font-size: 12px; }
    .name { background: #fff; border-right: 1px solid #aaa; display: grid; place-items: center; color: #000; }
    .fx { display: flex; background: linear-gradient(#e6e6e6, #d4d4d4); border-left: 1px solid #aaa; border-right: 1px solid #999; }
    .edit { background: #fff; border-right: 1px solid #888; }
    .gap { height: 2px; background: #eee; }

    .mid { flex: none; height: 824px; display: flex; }
    .sheet { width: 1595px; height: 824px; position: relative; overflow: hidden; }
    .hrow, .r { display: grid; grid-template-columns: 29px 260px 65px 48px 45px repeat(17, 65px) 43px; width: 1595px; }
    .hrow { height: 14px; border-top: 1px solid #8a8a8a; border-bottom: 1px solid #8a8a8a; background: linear-gradient(#f0f0f0, #d9d9d9); font-weight: 700; color: #5e5e5e; font-size: 12px; }
    .hrow span { border-right: 1px solid #8c8c8c; text-align: center; line-height: 12px; height: 12px; }
    .hrow span:last-child, .r .c:last-child { border-right: 0; }
    .hrow span:last-child { padding-left: 20px; }
    .hrow .corner { background: linear-gradient(135deg, transparent 0 50%, #fff 50%) 14px 1px / 11px 10px no-repeat; }
    .r { height: 15px; font-family: Lato, "Open Sans", sans-serif; font-size: 12.500px; color: #000; }
    .n { background: linear-gradient(#e4e4e4, #d2d2d2); border-right: 1px solid #8c8c8c; border-bottom: 1px solid #9a9a9a; text-align: center; font: 700 12px/14px "Open Sans", sans-serif; color: #626262; padding-right: 1px; height: 15px; }
    .c { border-right: 1px solid #cdcdcd; border-bottom: 1px solid #cdcdcd; line-height: 15px; height: 15px; padding-left: 2px; white-space: nowrap; }
    .src .ca { background: #f5e8fa; border-right-color: #0a3fb4; }
    .src .cb, .src .cc { background: #e9effb; text-align: right; padding: 0 3px 0 0; border-color: #b9bfd2; }
    .src .cc { border-right: 1px solid #0a3fb4; }
    .top .cb, .top .cc { background: #e9f1ea; }
    .top .ca, .top .cc { border-right-color: #0d5a1d; }

    .frame { position: absolute; left: 40px; top: 23px; width: 1205px; height: 720px; border: 1px solid #4f7fdc; border-radius: 5px; padding: 5px;
      background: linear-gradient(rgba(190,215,247,.82), rgba(196,230,255,.85) 50%, rgba(120,180,225,.85) 50.200%, rgba(140,203,243,.88)); }
    .paper { height: 708px; background: #fff; border: 1px solid #4f7fdc; border-radius: 10px; box-shadow: inset 0 0 0 1px #c9c9d2; }
    .grips { position: absolute; left: -1px; top: -1px; }
    .paper text { font-family: Lato, "Open Sans", sans-serif; font-size: 9.500px; fill: #000; }

    .vscroll { width: 16px; background: linear-gradient(90deg, #ededed, #fcfcfc); border-left: 1px solid #8c8c8c; display: flex; flex-direction: column; align-items: center; }
    .split { height: 14px; width: 15px; border-top: 1px solid #8a8a8a; border-bottom: 1px solid #8a8a8a; background: #fff; display: flex; flex-direction: column; align-items: center; justify-content: center; gap: 3px; }
    .split i { width: 9px; height: 1px; background: #777; }
    .vthumb { width: 8px; height: 276px; border-radius: 4px; background: #bfbfbf; margin: 0 0 0 1px; }

    .foot { height: 35px; display: grid; grid-template-columns: 66px 1fr; }
    .views { background: #e9e9e9; border-top: 1px solid #8c8c8c; border-right: 1px solid #8c8c8c; padding: 4px 0 0 3px; }
    .bars { display: flex; flex-direction: column; }
    .sheets { height: 17px; border-top: 1px solid #777; border-bottom: 1px solid #808080; background: #98a7ba; display: grid; grid-template-columns: 66px 11px 119px 52px 23px 505px 742px 11px 16px; }
    .nav { background: #efefef; }
    .stab { font-size: 11.500px; color: #111; background: linear-gradient(#e9e9e9, #d9d9d9); border: 1px solid #6f6f6f; border-top: 0; border-radius: 0 0 11px 4px; text-align: center; line-height: 13px; height: 15px; padding-left: 1px; }
    .cur { background: #fff; font-weight: 700; }
    .plus { background: #e6e6e6; font-weight: 700; font-size: 14px; color: #333; line-height: 12px; }
    .hs { background: linear-gradient(#e6e6e6, #fcfcfc); border-left: 2px solid #999; padding: 4px 0 0 3px; }
    .hthumb { width: 403px; height: 8px; border-radius: 4px; background: #bfbfbf; }
    .hend { background: #fff; border-left: 1px solid #888; border-right: 1px solid #888; padding: 3px 0 0 3px; display: flex; gap: 2px; }
    .hend i { width: 1px; height: 9px; background: #777; }
    .fill { background: #fff; }
    .status { height: 18px; background: linear-gradient(#f2f3f3, #e3e5e6 50%, #d9dcdd); display: grid; grid-template-columns: 93px 377px 158px 139px 36px 33px 29px 1fr; font-size: 11.500px; align-items: stretch; color: #000; }
    .status > * { border-right: 1px solid #999; box-shadow: 1px 0 #fbfbfb; display: flex; align-items: center; }
    .status > :last-child { border: 0; justify-content: flex-end; box-shadow: none; }
    .ready { padding-left: 6px; } .sum { padding-left: 3px; justify-content: space-between; padding-right: 5px; }
  `;

  firstUpdated() {
    this.renderRoot.querySelectorAll<HTMLElement>(".fit").forEach((el) => {
      const want = Number(el.dataset.w), n = (el.textContent ?? "").length;
      el.style.letterSpacing = `${((want - el.getBoundingClientRect().width) / n).toFixed(3)}px`;
    });
  }

  chart() {
    const end = X0 + 4500 * UNIT, bottom = TOP + 104 * PITCH;
    return html`<svg width="1191" height="706" viewBox="47 221 1191 706">
      ${[1, 2, 3, 4, 5, 6, 7, 8, 9].map((k) => svg`<rect x=${Math.round((X0 + k * 500 * UNIT) * 2) / 2 - 1} y=${TOP} width=${k === 9 ? 1.3 : 1.7} height="670" fill="#c6c6c6"/>`)}
      ${BARS.map(([m, f], i) => {
        const y = TOP + (i + 0.5) * PITCH + 0.3;
        return svg`${m ? svg`<rect x=${X0} y=${y} width=${m * UNIT} height="2.600" fill="#000" opacity=".18"/>` : ""}
          ${f ? svg`<rect x=${X0} y=${y + 2} width=${f * UNIT} height="2.400" fill="#000" opacity=".22"/><rect x=${X0} y=${y} width=${f * UNIT} height="2.200" fill="#6aa5e0"/>` : ""}
          ${m ? svg`<rect x=${X0} y=${y - 2.2} width=${m * UNIT} height="2.200" fill="#f07f7c"/>` : ""}
          <rect x="258" y=${y - PITCH / 2 - 0.8} width="3.500" height="1.400" fill="#b5b5b5"/>`;
      })}
      <rect x="260.600" y=${TOP} width="1.400" height="670" fill="#9f9f9f"/>
      <rect x="258" y=${bottom - 0.6} width=${end - 258} height="1.200" fill="#8f8f8f"/>
      ${LABELS.map(([t, w], i) => svg`<text x=${251.700 - w} y=${TOP + (i * 2 + 1.5) * PITCH + 4.8} textLength=${w} lengthAdjust="spacingAndGlyphs">traditional/${t}</text>`)}
      ${[0, 1, 2, 3, 4, 5, 6, 7, 8, 9].map((k) => { const w = k === 0 ? 5 : k === 1 ? 15 : 20; return svg`<text x=${X0 + k * 500 * UNIT - w / 2 - 0.5} y="918" textLength=${w} lengthAdjust="spacingAndGlyphs">${k * 500}</text>`; })}
      <rect x="1182" y="561" width="6" height="6" fill="#f07f7c"/><rect x="1182" y="581" width="6" height="6" fill="#6aa5e0"/>
      <text x="1190" y="568" textLength="34" lengthAdjust="spacingAndGlyphs">m-count</text><text x="1190" y="588" textLength="29" lengthAdjust="spacingAndGlyphs">f-count</text>
    </svg>`;
  }

  grips() {
    const pts: [number, number][] = [];
    for (let i = 0; i < 4; i++) pts.push([637 + i * 4, 216.500], [637 + i * 4, 929.500], [42.500, 568 + i * 4], [1241.500, 566 + i * 4]);
    for (const [x, y] of [[42, 217], [1237.500, 217], [42, 930], [1237.500, 930]]) pts.push([x, y], [x + 3.500, y], [x < 100 ? x : x + 3.500, y < 500 ? y + 3.500 : y - 3.500]);
    return html`<svg class="grips" width="1205" height="720" viewBox="40 214 1205 720">${pts.map(([x, y]) => svg`<rect x=${x} y=${y} width="2.500" height="2.500" fill="#fff"/><rect x=${x} y=${y} width="1.600" height="1.600" fill="#1f4a82"/>`)}
      <g fill="#0d5a1d"><rect x="288" y="205" width="4" height="3"/><rect x="399" y="205" width="4" height="3"/></g>
      <g fill="#7ba6b8"><rect x="288" y="216" width="4" height="4"/><rect x="399" y="216" width="4" height="4"/></g>
      <g fill="#9a12c4"><rect x="29" y="218.500" width="3.500" height="4.500"/><rect x="29" y="219" width="11" height="1"/></g></svg>`;
  }

  rowTpl(n: number) {
    const d = FILLED[n];
    return html`<div class=${classMap({ r: true, src: n > 1, top: n === 1 })}><div class="n">${n}</div>
      ${COLS.map((c, i) => html`<div class="c c${c.toLowerCase()}">${n === 1
        ? [fit("catpath", 37), fit("f-count", 35), fit("m-count", 41)][i] ?? ""
        : i === 0 ? (d ? fit(d[0], d[1]) : fit("tra", 14.5)) : d && i < 3 ? fit(String(d[i + 1]), String(d[i + 1]).length * 6.1) : ""}</div>`)}</div>`;
  }

  render() {
    return html`
    <div class="menubar">
      <svg width="16" height="18" viewBox="0 0 16 18"><path d="M11 .5c.2 2-1.500 3.800-3.300 3.800C7.500 2.500 9.200.8 11 .5zM8 5.500c1-.5 2-1 3.300-.9 1.600.1 2.700.8 3.400 1.800-3 2-2.200 5.700.8 6.800-.8 2-2.200 4.200-3.700 4.200-1.300 0-1.700-.7-3.200-.7s-2 .7-3.200.7C3.200 17.400.7 13 .7 9.700c0-3.200 2-5 4-5 1.400 0 2.500.8 3.300.8z" fill="#3d4957"/></svg>
      <b>${fit("Excel", 36)}</b><span>${fit("File", 23)}</span><span>${fit("Edit", 25)}</span><span>${fit("View", 32)}</span><span>${fit("Insert", 38)}</span><span>${fit("Format", 47)}</span><span>${fit("Tools", 36)}</span><span>${fit("Chart", 37)}</span><span>${fit("Window", 53)}</span>
      <svg width="12" height="16" viewBox="0 0 12 16"><path d="M8 0C6 1 7 2.500 5 3 2 3.500 0 5.500 1 8l2 .5-2 1.500 1.500 1.500L5 12l-1 2 3 1.500c3-2 2-4 1-5.500 2-.5 3.500-2.500 3-5L9.500 4l1-2.500-2.500 1z" fill="#2c2c2c"/></svg>
      <span>${fit("Help", 30)}</span>
      <svg width="16" height="14" viewBox="0 0 16 14"><path d="M1 1.500h14v10.500h-4V5.500H6V12H1z" fill="none" stroke="#111" stroke-width="1.700"/></svg>
      <svg width="16" height="16" viewBox="0 0 16 16"><path d="M4.500 1L8 3.500 11.500 1 16 4l-3 2.500L16 9l-4 3-4-3-4 3L0 9l3-2.500L0 4z" fill="#3c9ad6"/><path d="M8 3.500L13 6.500 8 9.500 3 6.500z" fill="#d9eefb"/><circle cx="11.500" cy="11.500" r="4.300" fill="#2f9e3a"/><path d="M9.500 11.500l1.500 2 3-3.500" fill="none" stroke="#fff" stroke-width="1.400"/></svg>
      <svg width="15" height="16" viewBox="0 0 15 16"><path d="M8 0L7 8l-6 7M13.500 2.500L7 8" fill="none" stroke="#3a3a3a" stroke-width="2"/><circle cx="10.500" cy="7.500" r="1.800" fill="none" stroke="#3a3a3a" stroke-width="1.200"/></svg>
      <svg width="15" height="14" viewBox="0 0 15 14"><rect width="15" height="14" rx="1" fill="#111"/><path d="M8.500 1.500h5v4.500h-5zM1.500 8h5v4.500h-5z" fill="#cfe3f6"/><path d="M2 4h4M4 2v4M9 10.500h4M11.500 8.500l2 2-2 2" stroke="#fff" fill="none"/></svg>
      <svg width="14" height="16" viewBox="0 0 14 16"><path d="M6 1a7.500 7.500 0 1 0 7.500 12C8 14 4 7 6 1z" fill="#a9c0d8" stroke="#6b8199" stroke-width=".9"/></svg>
      <svg width="22" height="16" viewBox="0 0 22 16"><g fill="none" stroke="#1a1a1a" stroke-width="2.100"><path d="M1 5.500c6-6 14-6 20 0M4.200 9c4.500-4.500 9-4.500 13.600 0M7.400 12c2.500-2.500 4.700-2.500 7.200 0"/></g><circle cx="11" cy="14" r="1.700" fill="#1a1a1a"/></svg>
      <svg width="16" height="12" viewBox="0 0 16 12"><rect width="16" height="12" fill="#1f35a8"/><path d="M0 0l8 6M8 0L0 6" stroke="#fff" stroke-width="1.400"/><path d="M4 0v6M0 3h8" stroke="#fff" stroke-width="2.200"/><path d="M4 0v6M0 3h8" stroke="#d22" stroke-width="1.200"/><path d="M11 3h1.500M13 6h1.500M11.500 9H13M3.500 9h2" stroke="#fff" stroke-width="1.500"/></svg>
      <svg width="22" height="14" viewBox="0 0 22 14"><rect x="1" y="2" width="17.500" height="10" rx="1.500" fill="#b8cfe6" stroke="#222" stroke-width="1.500"/><path d="M20 5v4" stroke="#222" stroke-width="1.600"/><path d="M4 9l4-3 2 2.500L15 5" fill="none" stroke="#111" stroke-width="1.800"/></svg>
      <span>${fit("Wed 11:50:36 PM", 119)}</span>
      <svg width="15" height="16" viewBox="0 0 15 16"><circle cx="6" cy="6.500" r="4.800" fill="none" stroke="#1a1a1a" stroke-width="1.900"/><path d="M9.500 10l4.500 4.500" stroke="#1a1a1a" stroke-width="2.400"/></svg>
    </div>
    <div class="desk">
      <div class="back">
        <div class="b-title"></div><div class="b-tools"></div><div class="b-gap"></div><div class="b-tabs"></div>
        <div class="b-rib">${fit("Themes", 34)}
          <svg width="60" height="52" viewBox="0 0 60 52"><path d="M1 1h20l8 7v18H1z" fill="#fafafa" stroke="#888"/><path d="M21 1v7h8" fill="#ddd" stroke="#888"/><text x="3" y="15" font-family="Liberation Serif,serif" font-size="15" fill="#2c6da8">Aa</text><path d="M3 22h24" stroke="#b66" stroke-width="4" stroke-dasharray="4 1"/>${arrow(35.500, 15)}<path d="M52 -2h8v7h-8z" fill="#8ec3e8" stroke="#4d86b5"/><path d="M52 9h8v7h-8z" fill="#bfe3a0" stroke="#6ba04e"/><text x="1" y="43" font-family="Open Sans,sans-serif" font-size="11">Themes</text><text x="51" y="42" font-family="Liberation Serif,serif" font-size="19" fill="#2c5a88">A</text></svg>
        </div>
        <div class="b-head">R</div><div class="b-cells"></div><div class="b-strip"></div><div class="b-stat"></div>
      </div>
      <div class="dock">${dock}</div>
      <div class="castle"></div>
      <div class="win">
        <div class="chrome">
          <div class="title"><i class="light red"></i><i class="light amber"></i><i class="light green"></i>
            <svg width="13" height="17" viewBox="0 0 13 17"><path d="M.5 1h8.500l3 3v12.500H.5z" fill="#f5f8f4" stroke="#a9b3a9" stroke-width=".8"/><path d="M1 1.500h8v3H1z" fill="#a9d2a7"/><path d="M2 7h9M2 9.500h9M2 12h9M2 14.500h9M5 5.500v10M8 5.500v10" stroke="#c9d8c9" stroke-width=".7"/></svg>
            <span>${fit("catpath-f-m-count.xlsx", 152)}</span></div>
          <div class="tools">
            ${I.fresh}${I.gallery}${I.open}${I.save}${I.print}<i class="tsep"></i>${I.cut}${I.copy}${I.paste}${I.brush}<i class="tsep"></i>${I.undo}${I.redo}<i class="tsep"></i>${I.sum}${I.az}${I.filter}<i class="tsep"></i>
            <div class="fxb"><div class="fxi">fx</div></div>${I.toolbox}${I.media}
            <div class="zoom">${fit("100%", 28)}<svg width="15" height="18" viewBox="0 0 15 18">${arrow(7.500, 9, "#444")}</svg></div><i class="tsep"></i>
            <div class="help">?</div>
            <div class="search"><svg width="22" height="16" viewBox="0 0 22 16"><circle cx="6" cy="6.500" r="4.300" fill="none" stroke="#6b6b6b" stroke-width="2"/><path d="M9 9.500l4 4.500" stroke="#6b6b6b" stroke-width="2.600"/>${arrow(17.500, 8, "#6b6b6b")}</svg><div class="in">${fit("Search in Sheet", 88)}</div></div>
          </div>
        </div>
        <div class="tabs">
          <div class="tab w84 home"><svg width="11" height="10" viewBox="0 0 11 10"><path d="M5.500 0L0 5h1.500v5h3V6.500h2V10h3V5H11L9 3.200V.8H7.700v1.300z" fill="#222"/></svg>${fit("Home", 32.500)}</div>
          <div class="tab w69">${fit("Layout", 38)}</div><div class="tab w69">${fit("Tables", 37)}</div><div class="tab active">${fit("Charts", 37)}</div>
          <div class="tab violet w112">${fit("Chart Layout", 72)}</div><div class="tab violet w70">${fit("Format", 40)}</div>
          <div class="tab w83">${fit("SmartArt", 50)}</div><div class="tab w84">${fit("Formulas", 52)}</div><div class="tab w58">${fit("Data", 26)}</div><div class="tab w71">${fit("Review", 40)}</div>
          <div class="end"><svg width="46" height="12" viewBox="0 0 46 12"><path d="M0 9l5-4.500L10 9" fill="none" stroke="#444b44" stroke-width="2.200"/><circle cx="29" cy="6" r="3.500" fill="none" stroke="#4a514a" stroke-width="2"/><path d="M29 0v2.500M29 9.500V12M23 6h2.500M32.500 6H35M24.800 1.800l1.700 1.700M31.500 8.500l1.700 1.700M33.200 1.800l-1.700 1.700M26.500 8.500l-1.700 1.700" stroke="#4a514a" stroke-width="1.800"/>${arrow(41, 6, "#4a514a")}</svg></div>
        </div>
        <div class="ribbon"><div class="panel">
          <div class="group g1"><h3>${fit("Change Chart Type", 83)}</h3><div class="row">${chartTypes.map(([n, w, g]) => html`<div class="cell"><svg width="50" height="33" viewBox="0 0 50 33">${g}${arrow(41, 17)}</svg>${fit(n, w)}</div>`)}</div></div>
          <div class="group g2"><h3>${fit("Insert Sparklines", 72)}</h3><div class="row">${sparks.map(([n, w, g]) => html`<div class="cell"><svg width="30" height="22" viewBox="0 0 30 22"><rect x=".5" y=".5" width="29" height="21" fill="#e4ebf3" stroke="#a5b6cc"/>${g}</svg>${fit(n, w)}</div>`)}</div></div>
          <div class="group g3"><h3>${fit("Data", 20)}</h3><div class="row">
            <div class="cell"><svg width="31" height="29" viewBox="0 0 31 29"><rect x=".5" y="2.500" width="24" height="20" fill="#fff" stroke="#4d86cc"/><path d="M6 7.500h12v10H6z" fill="#9dbcec"/><path d="M.5 7.500h24M.5 12.500h24M.5 17.500h24M6.500 2.500v20M12.500 2.500v20M18.500 2.500v20" stroke="#4d86cc" stroke-width=".9"/><path d="M14 18h5v10h-5z" fill="#4f97da" stroke="#2a63a6" stroke-width=".6"/><path d="M19.500 14h5v14h-5z" fill="#41b54a" stroke="#1f7e2a" stroke-width=".6"/><path d="M25 16h5v12h-5z" fill="#e8553c" stroke="#b23f30" stroke-width=".6"/></svg>${fit("Select", 29)}</div>
            <div class="cell"><svg width="64" height="21" viewBox="0 0 64 21"><rect x=".5" y=".5" width="63" height="20" rx="3" fill="#e9e9e9" stroke="#8b8b8b"/><path d="M32 .5h28.500a3 3 0 0 1 3 3v14a3 3 0 0 1-3 3H32z" fill="#9b9b9b" stroke="#6f6f6f"/>${[7, 39].map((x, k) => svg`<rect x=${x} y="2.500" width="18" height="15.500" fill="#fff" stroke="#3f6cb8"/><path d=${k ? `M${x} 2.500h18v5H${x}z` : `M${x} 2.500h6v15.500h-6z`} fill="#8fb3ee"/><path d="M${x} 7.700h18M${x} 12.900h18M${x + 6} 2.500v15.500M${x + 12} 2.500v15.500" stroke="#3f6cb8"/>`)}</svg>${fit("Switch Plot", 58)}</div></div></div>
          <div class="group g4"><h3>${fit("Chart Quick Layouts", 88)}</h3><div class="strip">${QL.map(quick)}${pager(false)}</div></div>
          <div class="group g5"><h3>${fit("Chart Styles", 51)}</h3><div class="strip">${pager(true)}${STYLES.map(styleThumb)}${pager(false)}</div></div>
        </div></div>
        <div class="formula"><div class="name">${fit("Chart 1", 39)}</div><svg width="18" height="16" viewBox="0 0 18 16"><path d="M6.500 6h5L9 2.500zM6.500 9.500h5L9 13z" fill="#333"/></svg>
          <div class="fx"><svg width="98" height="16" viewBox="0 0 98 16"><circle cx="16.500" cy="8" r="6.200" fill="#999"/><path d="M14 5.500l5 5m0-5l-5 5" stroke="#fff" stroke-width="1.800"/><circle cx="39.500" cy="8" r="6.200" fill="#999"/><path d="M36.500 8l2.500 3 4-5.500" fill="none" stroke="#fff" stroke-width="2"/><path d="M62 1.500a7.500 7.500 0 0 0 0 13" fill="none" stroke="#aaa"/><circle cx="66" cy="8" r="4" fill="#c4c4c4"/><path d="M63 8h6" stroke="#eee"/><text x="82" y="12" font-family="Liberation Serif,serif" font-style="italic" font-size="14" fill="#666">fx</text></svg></div>
          <div class="edit"></div><svg width="16" height="16" viewBox="0 0 16 16"><rect width="16" height="16" fill="#fff"/>${arrow(9, 8, "#333")}</svg></div>
        <div class="gap"></div>
        <div class="mid">
          <div class="sheet">
            <div class="hrow"><span class="corner"></span>${COLS.map((c) => html`<span>${c}</span>`)}</div>
            ${Array.from({ length: 54 }, (_, i) => this.rowTpl(i + 1))}
            <div class="frame"><div class="paper">${this.chart()}</div>${this.grips()}</div>
          </div>
          <div class="vscroll"><div class="split"><i></i><i></i></div><div class="vthumb"></div></div>
        </div>
        <div class="foot">
          <div class="views"><svg width="60" height="24" viewBox="0 0 60 24"><rect x=".5" y=".5" width="58" height="22.500" rx="3" fill="#ededed" stroke="#999"/><path d="M29.500 0v23" stroke="#999"/><g fill="none" stroke="#777"><rect x="8.500" y="6" width="14" height="11"/><path d="M8.500 8.700h14M8.500 11.500h14M8.500 14.200h14M12 6v11M15.500 6v11M19 6v11" stroke-width=".9"/><rect x="35" y="6" width="7.500" height="11"/><rect x="45.500" y="6" width="7.500" height="11"/><path d="M35 9.500h7.500M35 13.500h7.500M45.500 9.500H53M45.500 13.500H53M38.700 6v11M49.200 6v11" stroke-width=".9"/></g></svg></div>
          <div class="bars">
            <div class="sheets"><div class="nav"><svg width="64" height="15" viewBox="0 0 64 15"><g fill="#9a9a9a"><path d="M7 3.500h1.200v7H7zM15.500 3.500v7L9 7zM27 3.500v7L21 7zM38 3.500v7L44 7zM50 3.500v7L56 7zM57 3.500h1.200v7H57z"/></g></svg></div><i></i>
              <div class="stab">${fit("catpath-f-count.csv", 98)}</div><div class="stab cur">${fit("Sheet1", 35)}</div><div class="stab plus">+</div><i></i>
              <div class="hs"><div class="hthumb"></div></div><div class="hend"><i></i><i></i></div><div class="fill"></div></div>
            <div class="status"><div></div><div class="ready">${fit("Ready", 29)}</div><div></div><div class="sum">${fit("Sum= 84825", 62)}<svg width="10" height="8" viewBox="0 0 10 8"><path d="M.5 1h9L5 7z" fill="#111"/></svg></div><div></div><div></div><div></div>
              <div><svg width="12" height="14" viewBox="0 0 12 14"><path d="M1 13L11 2M5 13l6-7M9 13l2-3" stroke="#888"/></svg></div></div>
          </div>
        </div>
      </div>
    </div>`;
  }
}
